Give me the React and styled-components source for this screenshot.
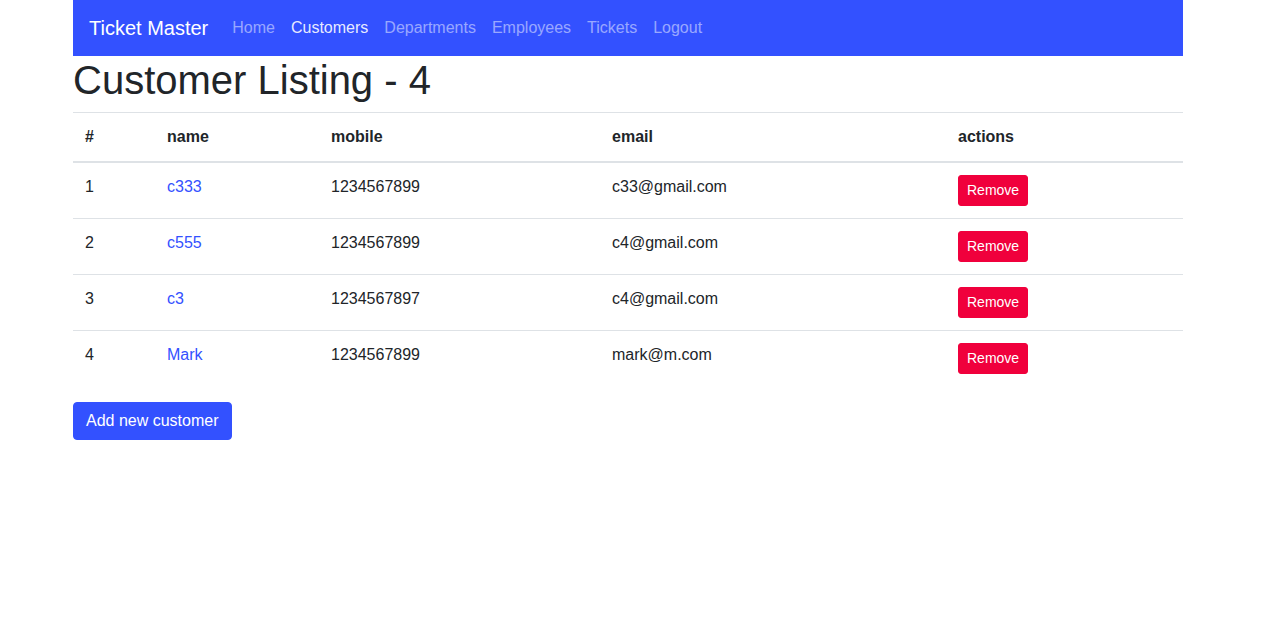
import React from "react";
import styled, { createGlobalStyle } from "styled-components";

const GlobalStyle = createGlobalStyle`
  * { box-sizing: border-box; }
  body {
    margin: 0;
    font-family: "Liberation Sans", Arial, sans-serif;
    font-size: 16px;
    line-height: 1.5;
    color: #212529;
    background: #fff;
  }
`;

const Container = styled.div`
  width: 1110px;
  margin-left: 73px;
`;

const Navbar = styled.nav`
  height: 56px;
  background: #3351ff;
  display: flex;
  align-items: center;
  padding: 8px 16px;
`;

const Brand = styled.a`
  font-size: 20px;
  line-height: 30px;
  color: #fff;
  margin-right: 16px;
  text-decoration: none;
  white-space: nowrap;
`;

const NavList = styled.div`
  display: flex;
`;

const NavLink = styled.a`
  padding: 8px;
  color: ${(p) => (p.$active ? "rgba(255,255,255,0.9)" : "rgba(255,255,255,0.5)")};
  text-decoration: none;
  font-size: 16px;
  line-height: 24px;
`;

const Title = styled.h1`
  font-size: 40px;
  font-weight: 400;
  line-height: 1.2;
  margin: 0 0 8px;
`;

const Table = styled.table`
  width: 100%;
  border-collapse: collapse;
  margin-bottom: 16px;
`;

const Th = styled.th`
  text-align: left;
  font-weight: 700;
  padding: 12px;
  border-top: 1px solid #dee2e6;
  border-bottom: 2px solid #dee2e6;
  vertical-align: bottom;
  width: ${(p) => p.$w}px;
`;

const Td = styled.td`
  padding: 12px;
  border-top: 1px solid #dee2e6;
  vertical-align: top;
`;

const NameLink = styled.a`
  color: #3351ff;
  text-decoration: none;
`;

const SmallDanger = styled.button`
  font-family: inherit;
  font-size: 14px;
  line-height: 1.5;
  padding: 4px 8px;
  border: 1px solid #f0003c;
  background: #f0003c;
  color: #fff;
  border-radius: 3px;
  cursor: pointer;
`;

const PrimaryButton = styled.button`
  font-family: inherit;
  font-size: 16px;
  line-height: 24px;
  padding: 6px 12px;
  border: 1px solid #3351ff;
  background: #3351ff;
  color: #fff;
  border-radius: 4px;
  cursor: pointer;
`;

const customers = [
  { id: 1, name: "c333", mobile: "1234567899", email: "c33@gmail.com" },
  { id: 2, name: "c555", mobile: "1234567899", email: "c4@gmail.com" },
  { id: 3, name: "c3", mobile: "1234567897", email: "c4@gmail.com" },
  { id: 4, name: "Mark", mobile: "1234567899", email: "mark@m.com" },
];

export default function App() {
  return (
    <>
      <GlobalStyle />
      <Container>
        <Navbar>
          <Brand href="#">Ticket Master</Brand>
          <NavList>
            <NavLink href="#">Home</NavLink>
            <NavLink href="#" $active>Customers</NavLink>
            <NavLink href="#">Departments</NavLink>
            <NavLink href="#">Employees</NavLink>
            <NavLink href="#">Tickets</NavLink>
            <NavLink href="#">Logout</NavLink>
          </NavList>
        </Navbar>
        <Title>Customer Listing - {customers.length}</Title>
        <Table>
          <thead>
            <tr>
              <Th $w={82}>#</Th>
              <Th $w={164}>name</Th>
              <Th $w={281}>mobile</Th>
              <Th $w={346}>email</Th>
              <Th $w={237}>actions</Th>
            </tr>
          </thead>
          <tbody>
            {customers.map((c) => (
              <tr key={c.id}>
                <Td>{c.id}</Td>
                <Td><NameLink href="#">{c.name}</NameLink></Td>
                <Td>{c.mobile}</Td>
                <Td>{c.email}</Td>
                <Td><SmallDanger>Remove</SmallDanger></Td>
              </tr>
            ))}
          </tbody>
        </Table>
        <PrimaryButton>Add new customer</PrimaryButton>
      </Container>
    </>
  );
}
